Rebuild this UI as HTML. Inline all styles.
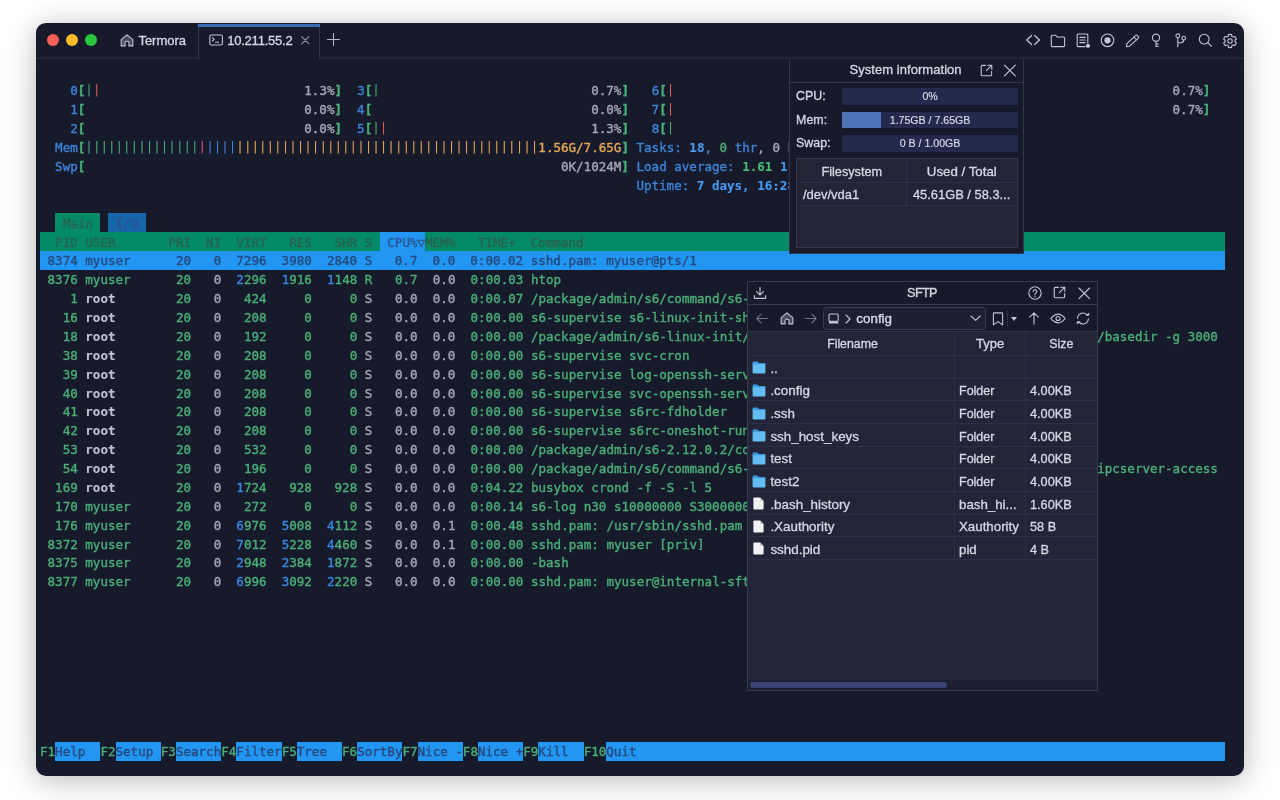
<!DOCTYPE html>
<html lang="en">
<head>
<meta charset="utf-8">
<title>Termora</title>
<style>
html,body{margin:0;padding:0;}
body{width:1280px;height:800px;background:#ffffff;overflow:hidden;position:relative;font-family:"Liberation Sans",sans-serif;}
#win{will-change:transform;position:absolute;left:36px;top:23px;width:1208px;height:753px;border-radius:10px;background:#171a2b;overflow:hidden;}
#shadow{position:absolute;left:36px;top:23.5px;width:1208px;height:752.5px;border-radius:10px;box-shadow:0 2px 26px rgba(0,0,0,0.21),0 10px 44px rgba(0,0,0,0.09);}
#titlebar{position:absolute;left:0;top:0;width:1208px;height:35.5px;background:linear-gradient(#171a2b,#171a2b) 0 0/100% 33.5px no-repeat,linear-gradient(#282b3f,#282b3f) 0 33.5px/100% 1px no-repeat,linear-gradient(#24273a,#24273a) 0 34.5px/100% 1px no-repeat;}
.tl{position:absolute;top:10.8px;width:12px;height:12px;border-radius:50%;}
.ui{color:#d5d7e2;font-size:13px;white-space:nowrap;position:absolute;}
svg{position:absolute;overflow:visible;}
.ic{stroke:#c3c6d4;fill:none;stroke-width:1.1;stroke-linecap:round;stroke-linejoin:round;}
.bar{position:absolute;left:52.4px;width:175.2px;height:16.5px;background:#242a4d;}
.bt{position:absolute;left:0;top:0;width:100%;text-align:center;color:#d5d7e2;-webkit-text-stroke:0.2px currentColor;font-size:10.6px;line-height:16.5px;white-space:nowrap;}
.tt{-webkit-text-stroke:0.32px currentColor;}
/* terminal */
#term{position:absolute;left:0;top:0;width:1208px;height:752px;font-family:"DejaVu Sans Mono","Liberation Mono",monospace;font-size:12.54px;color:#a5a8ba;}
.tr{position:absolute;left:4px;height:19.2px;line-height:18.88px;white-space:pre;letter-spacing:0.005px;}
.tr span{display:inline-block;height:17.7px;padding-top:1.5px;line-height:18.88px;vertical-align:top;-webkit-text-stroke:0.38px currentColor;}
.b{color:#3d82d6;}
.B{color:#4a9af2;font-weight:bold;}
.G{color:#4ab57a;font-weight:bold;}
.n{color:#4aad77;}
.N{color:#47bd74;font-weight:bold;}
.g{color:#a3a6b8;}
.W{color:#bfc2d1;font-weight:bold;}
.tr span.W,.tr span.B,.tr span.N{-webkit-text-stroke:0.1px currentColor;}
.tr span.G{-webkit-text-stroke:0.3px currentColor;}
.r{color:#e0604f;}
.m{color:#d4507c;}
.u{color:#3a86e0;}
.o{color:#e3a656;}
.tr span.tri{width:7.55px;overflow:hidden;text-align:center;}
.tr span.k{-webkit-text-stroke:0;position:relative;top:-1.2px;}
.tabm{background:#058a68;color:#286551;}
.tabi{background:#1766aa;color:#2a5490;}
.hdr{background:#058a68;color:#27624f;}
.hsel{background:#2196f3;color:#2a5590;}
.sel{background:#2196f3;color:#27497c;}
.fk{background:#2196f3;color:#27497c;}
</style>
</head>
<body>
<div id="shadow"></div>
<div id="win">
<div id="inner" style="position:absolute;left:0;top:0.5px;width:1208px;height:752.5px;">
<div id="term">
<div class="tr" style="top:57.48px"><span class="b">    0</span><span class="G">[</span><span class="n k">|</span><span class="r k">|</span>                           <span class="g">1.3%</span><span class="G">]</span><span class="b">  3</span><span class="G">[</span><span class="n k">|</span>                            <span class="g">0.7%</span><span class="G">]</span><span class="b">   6</span><span class="G">[</span><span class="r k">|</span>                                                                  <span class="g">0.7%</span><span class="G">]</span></div>
<div class="tr" style="top:76.36px"><span class="b">    1</span><span class="G">[</span>                             <span class="g">0.0%</span><span class="G">]</span><span class="b">  4</span><span class="G">[</span>                             <span class="g">0.0%</span><span class="G">]</span><span class="b">   7</span><span class="G">[</span><span class="r k">|</span>                                                                  <span class="g">0.7%</span><span class="G">]</span></div>
<div class="tr" style="top:95.24px"><span class="b">    2</span><span class="G">[</span>                             <span class="g">0.0%</span><span class="G">]</span><span class="b">  5</span><span class="G">[</span><span class="n k">|</span><span class="r k">|</span>                           <span class="g">1.3%</span><span class="G">]</span>   <span class="b">8</span><span class="G">[</span><span class="n k">|</span></div>
<div class="tr" style="top:114.12px">  <span class="b">Mem</span><span class="G">[</span><span class="n k">|||||||||||||||</span><span class="m k">|</span><span class="u k">||||</span><span class="o k">||||||||||||||||||||||||||||||||||||||||</span><span class="o">1.56G/7.65G</span><span class="G">]</span> <span class="b">Tasks: </span><span class="B">18</span><span class="b">, </span><span class="n">0</span><span class="b"> thr</span><span class="g">, 0 kthr</span><span class="b">; </span><span class="N">1</span><span class="b"> running</span></div>
<div class="tr" style="top:133.00px">  <span class="b">Swp</span><span class="G">[</span>                                                               <span class="g">0K/1024M</span><span class="G">]</span> <span class="b">Load average: </span><span class="N">1.61 </span><span class="B">1.48 </span><span class="b">1.40</span></div>
<div class="tr" style="top:151.88px">                                                                               <span class="b">Uptime: </span><span class="B">7 days, 16:28:41</span></div>
<div class="tr" style="top:189.64px">  <span class="tabm"> Main </span> <span class="tabi"> I/O </span></div>
<div class="tr" style="top:208.52px"><span class="hdr">  PID USER       PRI  NI  VIRT   RES   SHR S </span><span class="hsel"> CPU%</span><span class="hsel tri">▽</span><span class="hdr">MEM%   TIME+  Command                                                                                     </span></div>
<div class="tr" style="top:227.40px"><span class="sel"> 8374 myuser      20   0  7296  3980  2840 S   0.7  0.0  0:00.02 sshd.pam: myuser@pts/1                                                                      </span></div>
<div class="tr" style="top:246.28px"><span class="n"> 8376</span> <span class="n">myuser    </span> <span class="n"> 20</span> <span class="g">  0</span>  <span class="u">2</span><span class="n">296</span>  <span class="u">1</span><span class="n">916</span>  <span class="u">1</span><span class="n">148</span> <span class="n">R</span>   <span class="n">0.7</span>  <span class="g">0.0</span>  <span class="n">0:00.03</span> <span class="n">htop</span></div>
<div class="tr" style="top:265.16px"><span class="n">    1</span> <span class="W">root      </span> <span class="n"> 20</span> <span class="g">  0</span>   <span class="n">424</span>     <span class="n">0</span>     <span class="n">0</span> <span class="g">S</span>   <span class="g">0.0</span>  <span class="g">0.0</span>  <span class="n">0:00.07</span> <span class="n">/package/admin/s6/command/s6-svscan -d4 -- /run/service</span></div>
<div class="tr" style="top:284.04px"><span class="n">   16</span> <span class="W">root      </span> <span class="n"> 20</span> <span class="g">  0</span>   <span class="n">208</span>     <span class="n">0</span>     <span class="n">0</span> <span class="g">S</span>   <span class="g">0.0</span>  <span class="g">0.0</span>  <span class="n">0:00.00</span> <span class="n">s6-supervise s6-linux-init-shutdownd</span></div>
<div class="tr" style="top:302.92px"><span class="n">   18</span> <span class="W">root      </span> <span class="n"> 20</span> <span class="g">  0</span>   <span class="n">192</span>     <span class="n">0</span>     <span class="n">0</span> <span class="g">S</span>   <span class="g">0.0</span>  <span class="g">0.0</span>  <span class="n">0:00.00</span> <span class="n">/package/admin/s6-linux-init/command/s6-linux-init-shutdownd -d3 -c /run/s6/basedir -g 3000</span></div>
<div class="tr" style="top:321.80px"><span class="n">   38</span> <span class="W">root      </span> <span class="n"> 20</span> <span class="g">  0</span>   <span class="n">208</span>     <span class="n">0</span>     <span class="n">0</span> <span class="g">S</span>   <span class="g">0.0</span>  <span class="g">0.0</span>  <span class="n">0:00.00</span> <span class="n">s6-supervise svc-cron</span></div>
<div class="tr" style="top:340.68px"><span class="n">   39</span> <span class="W">root      </span> <span class="n"> 20</span> <span class="g">  0</span>   <span class="n">208</span>     <span class="n">0</span>     <span class="n">0</span> <span class="g">S</span>   <span class="g">0.0</span>  <span class="g">0.0</span>  <span class="n">0:00.00</span> <span class="n">s6-supervise log-openssh-server</span></div>
<div class="tr" style="top:359.56px"><span class="n">   40</span> <span class="W">root      </span> <span class="n"> 20</span> <span class="g">  0</span>   <span class="n">208</span>     <span class="n">0</span>     <span class="n">0</span> <span class="g">S</span>   <span class="g">0.0</span>  <span class="g">0.0</span>  <span class="n">0:00.00</span> <span class="n">s6-supervise svc-openssh-server</span></div>
<div class="tr" style="top:378.44px"><span class="n">   41</span> <span class="W">root      </span> <span class="n"> 20</span> <span class="g">  0</span>   <span class="n">208</span>     <span class="n">0</span>     <span class="n">0</span> <span class="g">S</span>   <span class="g">0.0</span>  <span class="g">0.0</span>  <span class="n">0:00.00</span> <span class="n">s6-supervise s6rc-fdholder</span></div>
<div class="tr" style="top:397.32px"><span class="n">   42</span> <span class="W">root      </span> <span class="n"> 20</span> <span class="g">  0</span>   <span class="n">208</span>     <span class="n">0</span>     <span class="n">0</span> <span class="g">S</span>   <span class="g">0.0</span>  <span class="g">0.0</span>  <span class="n">0:00.00</span> <span class="n">s6-supervise s6rc-oneshot-runner</span></div>
<div class="tr" style="top:416.20px"><span class="n">   53</span> <span class="W">root      </span> <span class="n"> 20</span> <span class="g">  0</span>   <span class="n">532</span>     <span class="n">0</span>     <span class="n">0</span> <span class="g">S</span>   <span class="g">0.0</span>  <span class="g">0.0</span>  <span class="n">0:00.00</span> <span class="n">/package/admin/s6-2.12.0.2/command/s6-ipcserverd -1 -- s6-ipcserver-access</span></div>
<div class="tr" style="top:435.08px"><span class="n">   54</span> <span class="W">root      </span> <span class="n"> 20</span> <span class="g">  0</span>   <span class="n">196</span>     <span class="n">0</span>     <span class="n">0</span> <span class="g">S</span>   <span class="g">0.0</span>  <span class="g">0.0</span>  <span class="n">0:00.00</span> <span class="n">/package/admin/s6/command/s6-ipcserver-socketbinder -- s6 s6-ipcserverd s6-ipcserver-access</span></div>
<div class="tr" style="top:453.96px"><span class="n">  169</span> <span class="W">root      </span> <span class="n"> 20</span> <span class="g">  0</span>  <span class="u">1</span><span class="n">724</span>   <span class="n">928</span>   <span class="n">928</span> <span class="g">S</span>   <span class="g">0.0</span>  <span class="g">0.0</span>  <span class="n">0:04.22</span> <span class="n">busybox crond -f -S -l 5</span></div>
<div class="tr" style="top:472.84px"><span class="n">  170</span> <span class="n">myuser    </span> <span class="n"> 20</span> <span class="g">  0</span>   <span class="n">272</span>     <span class="n">0</span>     <span class="n">0</span> <span class="g">S</span>   <span class="g">0.0</span>  <span class="g">0.0</span>  <span class="n">0:00.14</span> <span class="n">s6-log n30 s10000000 S30000000 T !gzip /config/logs/openssh</span></div>
<div class="tr" style="top:491.72px"><span class="n">  176</span> <span class="n">myuser    </span> <span class="n"> 20</span> <span class="g">  0</span>  <span class="u">6</span><span class="n">976</span>  <span class="u">5</span><span class="n">008</span>  <span class="u">4</span><span class="n">112</span> <span class="g">S</span>   <span class="g">0.0</span>  <span class="g">0.1</span>  <span class="n">0:00.48</span> <span class="n">sshd.pam: /usr/sbin/sshd.pam -D -e -p 2222 [listener] 0 of 10-100</span></div>
<div class="tr" style="top:510.60px"><span class="n"> 8372</span> <span class="n">myuser    </span> <span class="n"> 20</span> <span class="g">  0</span>  <span class="u">7</span><span class="n">012</span>  <span class="u">5</span><span class="n">228</span>  <span class="u">4</span><span class="n">460</span> <span class="g">S</span>   <span class="g">0.0</span>  <span class="g">0.1</span>  <span class="n">0:00.00</span> <span class="n">sshd.pam: myuser [priv]</span></div>
<div class="tr" style="top:529.48px"><span class="n"> 8375</span> <span class="n">myuser    </span> <span class="n"> 20</span> <span class="g">  0</span>  <span class="u">2</span><span class="n">948</span>  <span class="u">2</span><span class="n">384</span>  <span class="u">1</span><span class="n">872</span> <span class="g">S</span>   <span class="g">0.0</span>  <span class="g">0.0</span>  <span class="n">0:00.00</span> <span class="n">-bash</span></div>
<div class="tr" style="top:548.36px"><span class="n"> 8377</span> <span class="n">myuser    </span> <span class="n"> 20</span> <span class="g">  0</span>  <span class="u">6</span><span class="n">996</span>  <span class="u">3</span><span class="n">092</span>  <span class="u">2</span><span class="n">220</span> <span class="g">S</span>   <span class="g">0.0</span>  <span class="g">0.0</span>  <span class="n">0:00.00</span> <span class="n">sshd.pam: myuser@internal-sftp</span></div>
<div class="tr" style="top:718.28px"><span class="n">F1</span><span class="fk">Help  </span><span class="n">F2</span><span class="fk">Setup </span><span class="n">F3</span><span class="fk">Search</span><span class="n">F4</span><span class="fk">Filter</span><span class="n">F5</span><span class="fk">Tree  </span><span class="n">F6</span><span class="fk">SortBy</span><span class="n">F7</span><span class="fk">Nice -</span><span class="n">F8</span><span class="fk">Nice +</span><span class="n">F9</span><span class="fk">Kill  </span><span class="n">F10</span><span class="fk">Quit                                                                              </span></div>
</div>
<div id="titlebar">
  <div class="tl" style="left:11px;background:#fe5f57"></div>
  <div class="tl" style="left:30px;background:#febc2e"></div>
  <div class="tl" style="left:48.5px;background:#28c840"></div>
</div>
<!-- tabs -->
<div style="position:absolute;left:162px;top:0;width:122px;height:35.5px;background:#171a2b;border-left:1px solid #34374b;border-right:1px solid #34374b;box-sizing:border-box;"></div>
<div style="position:absolute;left:162px;top:0;width:122px;height:3.2px;background:#3a6cb3;"></div>
<svg style="left:84px;top:10.5px" width="14" height="13" viewBox="0 0 14 13"><path class="ic" style="fill:#4b4e60" d="M1.2 5.6 L7 0.9 L12.8 5.6 V11.9 H8.9 V8.2 Q8.9 7.2 7.9 7.2 H6.1 Q5.1 7.2 5.1 8.2 V11.9 H1.2 Z"/></svg>
<div class="ui tt" style="left:102.4px;top:9px;line-height:16px;font-size:13px;">Termora</div>
<svg style="left:173px;top:10.6px" width="15" height="13" viewBox="0 0 15 13"><rect class="ic" x="0.8" y="1" width="12.6" height="10" rx="1.6"/><path class="ic" d="M3.3 3.6 L5.2 5.3 L3.3 7 M6.4 8.2 H9.6"/></svg>
<div class="ui tt" style="left:191.2px;top:9px;line-height:16px;font-size:13px;letter-spacing:-0.22px;">10.211.55.2</div>
<svg style="left:264.5px;top:12.6px" width="9" height="9" viewBox="0 0 9 9"><path class="ic" style="stroke:#9093a5" d="M0.7 0.7 L7.9 7.9 M7.9 0.7 L0.7 7.9"/></svg>
<svg style="left:290.8px;top:9.9px" width="13" height="13" viewBox="0 0 13 13"><path class="ic" style="stroke-width:1;stroke:#b4b7c6" d="M6.5 0.5 V12.5 M0.5 6.5 H12.5"/></svg>
<!-- right toolbar icons; centers at 997,1021.6,1046.2,1070.8,1095.4,1120,1144.6,1169.2,1193.8 ; cy=16.5 -->
<svg style="left:989px;top:9.5px" width="16" height="14" viewBox="0 0 16 14"><path class="ic" style="stroke-width:1.3" d="M6.6 2.6 L1.8 7 L6.6 11.4 M9.6 2.6 L14.4 7 L9.6 11.4"/></svg>
<svg style="left:1014px;top:10px" width="16" height="14" viewBox="0 0 16 14"><path class="ic" d="M1.3 2.2 Q1.3 1.2 2.3 1.2 H5.6 L7.2 3 H13.6 Q14.6 3 14.6 4 V11.6 Q14.6 12.6 13.6 12.6 H2.3 Q1.3 12.6 1.3 11.6 Z"/></svg>
<svg style="left:1040px;top:9.5px" width="15" height="16" viewBox="0 0 15 16"><path class="ic" d="M9.2 13.6 H2.2 Q1.2 13.6 1.2 12.6 V2 Q1.2 1 2.2 1 H10.8 Q11.8 1 11.8 2 V10"/><path class="ic" d="M3.8 4.4 H9.2 M3.8 7 H9.2 M3.8 9.6 H9.2"/><circle cx="12" cy="12.8" r="2.1" fill="#c3c6d4"/></svg>
<svg style="left:1063.5px;top:9.5px" width="15" height="15" viewBox="0 0 15 15"><circle class="ic" cx="7.5" cy="7.3" r="6.3"/><circle cx="7.5" cy="7.3" r="3.1" fill="#c3c6d4"/></svg>
<svg style="left:1088.5px;top:10px" width="15" height="14" viewBox="0 0 15 14"><path class="ic" d="M1.4 12.6 L1.9 9.6 L10.6 1.3 Q11.3 0.7 12 1.3 L13.4 2.7 Q14 3.4 13.4 4.1 L4.6 12.2 Z M8.8 3.1 L11.7 5.9"/></svg>
<svg style="left:1114px;top:9.5px" width="12" height="15" viewBox="0 0 12 15"><circle class="ic" cx="6" cy="4.7" r="3.6"/><path class="ic" d="M6 8.3 V13.6 M6 11 H8.4 M6 13.2 H8.4"/></svg>
<svg style="left:1138px;top:9.5px" width="13" height="15" viewBox="0 0 13 15"><circle class="ic" cx="3.8" cy="2.8" r="1.9"/><circle class="ic" cx="9.7" cy="5.2" r="1.9"/><path class="ic" d="M3.8 4.7 V13.7 M9.7 7.1 Q9.7 9.8 7 9.8 H3.8"/></svg>
<svg style="left:1162px;top:9.5px" width="15" height="15" viewBox="0 0 15 15"><circle class="ic" cx="6.2" cy="6.1" r="4.9"/><path class="ic" d="M9.8 9.7 L13.4 13.2"/></svg>
<svg style="left:1186px;top:9px" width="16" height="16" viewBox="0 0 16 16"><path class="ic" d="M6.21 3.33 L6.40 1.60 A6.6 6.6 0 0 1 9.60 1.60 L9.79 3.33 A5.0 5.0 0 0 1 11.15 4.11 L12.75 3.42 A6.6 6.6 0 0 1 14.34 6.18 L12.94 7.22 A5.0 5.0 0 0 1 12.94 8.78 L14.34 9.82 A6.6 6.6 0 0 1 12.75 12.58 L11.15 11.89 A5.0 5.0 0 0 1 9.79 12.67 L9.60 14.40 A6.6 6.6 0 0 1 6.40 14.40 L6.21 12.67 A5.0 5.0 0 0 1 4.85 11.89 L3.25 12.58 A6.6 6.6 0 0 1 1.66 9.82 L3.06 8.78 A5.0 5.0 0 0 1 3.06 7.22 L1.66 6.18 A6.6 6.6 0 0 1 3.25 3.42 L4.85 4.11 A5.0 5.0 0 0 1 6.21 3.33 Z"/><circle class="ic" cx="8" cy="8" r="2.2"/></svg>

<!-- System information panel -->
<div id="sys" style="position:absolute;left:753.1px;top:35px;width:234.9px;height:195px;background:#171a2b;border:1px solid #34374b;border-top:none;box-sizing:border-box;">
  <div style="position:absolute;left:0;top:23px;width:232.9px;height:1px;background:#34374b;"></div>
  <div class="ui tt" style="left:59.4px;top:3.9px;line-height:16px;font-size:13px;letter-spacing:0.05px;">System information</div>
  <svg style="left:189.5px;top:5px" width="13" height="13" viewBox="0 0 13 13"><path class="ic" d="M5.4 1.4 H2.6 Q1.2 1.4 1.2 2.8 V10.4 Q1.2 11.8 2.6 11.8 H10.2 Q11.6 11.8 11.6 10.4 V7.6 M7.6 1.2 H11.8 V5.4 M11.6 1.4 L6.4 6.6"/></svg>
  <svg style="left:214px;top:5px" width="13" height="13" viewBox="0 0 13 13"><path class="ic" d="M0.5 1.1 L11.3 11.9 M11.3 1.1 L0.5 11.9"/></svg>
  <div class="ui tt" style="left:6px;top:29.8px;line-height:16.5px;font-size:12.4px;">CPU:</div>
  <div class="ui tt" style="left:6px;top:53.3px;line-height:16.5px;font-size:12.4px;">Mem:</div>
  <div class="ui tt" style="left:6px;top:76.8px;line-height:16.5px;font-size:12.4px;">Swap:</div>
  <div class="bar" style="top:29.5px;"><div class="bt">0%</div></div>
  <div class="bar" style="top:53px;"><div style="position:absolute;left:0;top:0;height:16.5px;width:39px;background:#4c71b5;"></div><div class="bt">1.75GB / 7.65GB</div></div>
  <div class="bar" style="top:76.5px;"><div class="bt">0 B / 1.00GB</div></div>
  <div style="position:absolute;left:6.2px;top:99.5px;width:221.6px;height:89.5px;background:#222537;border:1px solid #35384d;box-sizing:border-box;">
    <div style="position:absolute;left:0;top:23px;width:219.6px;height:1px;background:#2d3046;"></div>
    <div style="position:absolute;left:0;top:45.7px;width:219.6px;height:1px;background:#2d3046;"></div>
    <div style="position:absolute;left:108.6px;top:0;width:1px;height:46.2px;background:#2d3046;"></div>
    <div class="ui tt" style="left:0;top:4.7px;width:109px;text-align:center;line-height:16px;font-size:12.7px;">Filesystem</div>
    <div class="ui tt" style="left:109.5px;top:4.7px;width:110px;text-align:center;line-height:16px;font-size:13.3px;">Used / Total</div>
    <div class="ui tt" style="left:5.6px;top:27.9px;line-height:16px;font-size:13px;">/dev/vda1</div>
    <div class="ui tt" style="left:115.6px;top:27.9px;line-height:16px;font-size:12.9px;">45.61GB / 58.3...</div>
  </div>
</div>

<!-- SFTP panel -->
<div style="position:absolute;left:711px;top:257.0px;width:351px;height:410.5px;background:#171a2b;border:1px solid #383b50;box-sizing:border-box;"></div>
<div style="position:absolute;left:712px;top:280.5px;width:349px;height:1px;background:#383b50;"></div>
<div style="position:absolute;left:712px;top:307.8px;width:349px;height:358.7px;background:#222537;"></div>
<div style="position:absolute;left:712px;top:307.7px;width:349px;height:1.0px;background:#2f3248;"></div>
<div class="ui tt" style="left:871.1px;top:261.5px;font-size:12.6px;line-height:16px;letter-spacing:-0.6px;">SFTP</div>
<svg style="left:717px;top:262.5px" width="14" height="14" viewBox="0 0 14 14"><path class="ic" d="M7 1.2 V8.8 M3.6 5.6 L7 9 L10.4 5.6 M1.4 9.6 V12.4 H12.6 V9.6"/></svg>
<svg style="left:991.5px;top:262.0px" width="14" height="14" viewBox="0 0 14 14"><circle class="ic" cx="7" cy="7" r="6.2"/><path class="ic" d="M5.2 5.4 Q5.2 3.7 7 3.7 Q8.8 3.7 8.8 5.3 Q8.8 6.4 7.8 6.9 Q7 7.3 7 8.3"/><circle cx="7" cy="10.3" r="0.75" fill="#c3c6d4"/></svg>
<svg style="left:1016.5px;top:262.7px" width="13" height="13" viewBox="0 0 13 13"><path class="ic" d="M5.4 1.4 H2.6 Q1.2 1.4 1.2 2.8 V10.4 Q1.2 11.8 2.6 11.8 H10.2 Q11.6 11.8 11.6 10.4 V7.6 M7.6 1.2 H11.8 V5.4 M11.6 1.4 L6.4 6.6"/></svg>
<svg style="left:1041.5px;top:263.3px" width="13" height="13" viewBox="0 0 13 13"><path class="ic" d="M1 1 L11.6 11.6 M11.6 1 L1 11.6"/></svg>
<svg style="left:720px;top:289.5px" width="12" height="11" viewBox="0 0 12 11"><path class="ic" style="stroke:#70738a" d="M11.4 5.5 H0.8 M5 1.2 L0.8 5.5 L5 9.8"/></svg>
<svg style="left:743.5px;top:288.5px" width="14" height="13" viewBox="0 0 14 13"><path class="ic" style="fill:#4b4e60" d="M1.2 5.6 L7 0.9 L12.8 5.6 V11.9 H8.9 V8.2 Q8.9 7.2 7.9 7.2 H6.1 Q5.1 7.2 5.1 8.2 V11.9 H1.2 Z"/></svg>
<svg style="left:768.6px;top:289.5px" width="12" height="11" viewBox="0 0 12 11"><path class="ic" style="stroke:#70738a" d="M0.6 5.5 H11.2 M7 1.2 L11.2 5.5 L7 9.8"/></svg>
<div style="position:absolute;left:787px;top:283.5px;width:163px;height:22.5px;background:#1d2033;border:1px solid #393c52;border-radius:3.5px;box-sizing:border-box;"></div>
<svg style="left:791.5px;top:289.0px" width="12" height="12" viewBox="0 0 12 12"><rect class="ic" x="1" y="1" width="9.2" height="7.4" rx="1.2"/><rect x="0.8" y="8.9" width="9.6" height="1.7" rx="0.4" fill="#c3c6d4"/></svg>
<svg style="left:808.5px;top:290.0px" width="6" height="10" viewBox="0 0 6 10"><path class="ic" d="M1 1 L5 5 L1 9"/></svg>
<div class="ui tt" style="left:820.3px;top:287.5px;font-size:13.4px;line-height:16px;-webkit-text-stroke:0.4px currentColor;">config</div>
<svg style="left:933.8px;top:291.9px" width="12" height="7" viewBox="0 0 12 7"><path class="ic" d="M1 1 L5.6 5.4 L10.2 1"/></svg>
<svg style="left:956px;top:288.3px" width="12" height="14" viewBox="0 0 12 14"><path class="ic" d="M1.4 1.8 Q1.4 0.9 2.3 0.9 H9.7 Q10.6 0.9 10.6 1.8 V12.9 L6 9.6 L1.4 12.9 Z"/></svg>
<div style="position:absolute;left:971.4px;top:287.8px;width:0.8px;height:1.0px;background:#4a4d63;"></div>
<div style="position:absolute;left:971.4px;top:289.8px;width:0.8px;height:1.0px;background:#4a4d63;"></div>
<div style="position:absolute;left:971.4px;top:291.8px;width:0.8px;height:1.0px;background:#4a4d63;"></div>
<div style="position:absolute;left:971.4px;top:293.8px;width:0.8px;height:1.0px;background:#4a4d63;"></div>
<div style="position:absolute;left:971.4px;top:295.8px;width:0.8px;height:1.0px;background:#4a4d63;"></div>
<div style="position:absolute;left:971.4px;top:297.8px;width:0.8px;height:1.0px;background:#4a4d63;"></div>
<div style="position:absolute;left:971.4px;top:299.8px;width:0.8px;height:1.0px;background:#4a4d63;"></div>
<div style="position:absolute;left:971.4px;top:301.8px;width:0.8px;height:1.0px;background:#4a4d63;"></div>
<svg style="left:975px;top:293.7px" width="6" height="4" viewBox="0 0 6 4"><path d="M0 0 H6 L3 4 Z" fill="#c3c6d4"/></svg>
<svg style="left:992px;top:288.7px" width="12" height="13" viewBox="0 0 12 13"><path class="ic" d="M6 12 V1 M1.7 5.2 L6 0.9 L10.3 5.2"/></svg>
<svg style="left:1014px;top:289.5px" width="16" height="11" viewBox="0 0 16 11"><path class="ic" d="M0.8 5.5 Q8 -3.2 15.2 5.5 Q8 14.2 0.8 5.5 Z"/><circle class="ic" cx="8" cy="5.5" r="2"/></svg>
<svg style="left:1039px;top:288.5px" width="16" height="13" viewBox="0 0 16 13"><path class="ic" d="M2.6 6.2 A5.4 5.4 0 0 1 12.4 3.4 M13.4 6.8 A5.4 5.4 0 0 1 3.6 9.6"/><path d="M10.6 3.6 H14.2 V0.6 Z M5.4 9.4 H1.8 V12.4 Z" fill="#c3c6d4"/></svg>
<div style="position:absolute;left:712px;top:331.7px;width:349px;height:1.0px;background:#2c2f45;"></div>
<div style="position:absolute;left:918.0px;top:308.2px;width:1.0px;height:227.76px;background:#2c2f45;"></div>
<div style="position:absolute;left:989.1px;top:308.2px;width:1.0px;height:227.76px;background:#2c2f45;"></div>
<div class="ui tt" style="left:713.2px;top:312.6px;font-size:12.3px;line-height:16px;width:206.5px;text-align:center;">Filename</div>
<div class="ui tt" style="left:918.5px;top:312.6px;font-size:13px;line-height:16px;width:71.09999999999991px;text-align:center;">Type</div>
<div class="ui tt" style="left:989.6px;top:312.6px;font-size:12.4px;line-height:16px;width:71.40000000000009px;text-align:center;">Size</div>
<div style="position:absolute;left:712px;top:354.34px;width:349px;height:1.0px;background:#2c2f45;"></div>
<svg style="left:716px;top:337.82px" width="14" height="13" viewBox="0 0 14 13"><path d="M0.6 1.6 Q0.6 0.6 1.6 0.6 H5 Q5.6 0.6 6 1.1 L6.8 2.1 H12.4 Q13.4 2.1 13.4 3.1 V4 H0.6 Z" fill="#3c9be3"/><path d="M0.6 3.3 H13.4 V11.6 Q13.4 12.6 12.4 12.6 H1.6 Q0.6 12.6 0.6 11.6 Z" fill="#63bdf3"/></svg>
<div class="ui tt" style="left:734.4px;top:337.22px;font-size:13.4px;line-height:16px;">..</div>
<div style="position:absolute;left:712px;top:376.98px;width:349px;height:1.0px;background:#2c2f45;"></div>
<svg style="left:716px;top:360.46px" width="14" height="13" viewBox="0 0 14 13"><path d="M0.6 1.6 Q0.6 0.6 1.6 0.6 H5 Q5.6 0.6 6 1.1 L6.8 2.1 H12.4 Q13.4 2.1 13.4 3.1 V4 H0.6 Z" fill="#3c9be3"/><path d="M0.6 3.3 H13.4 V11.6 Q13.4 12.6 12.4 12.6 H1.6 Q0.6 12.6 0.6 11.6 Z" fill="#63bdf3"/></svg>
<div class="ui tt" style="left:734.4px;top:359.86px;font-size:13.4px;line-height:16px;">.config</div>
<div class="ui tt" style="left:923px;top:359.86px;font-size:12.5px;line-height:16px;">Folder</div>
<div class="ui tt" style="left:994px;top:359.86px;font-size:12.7px;line-height:16px;">4.00KB</div>
<div style="position:absolute;left:712px;top:399.62px;width:349px;height:1.0px;background:#2c2f45;"></div>
<svg style="left:716px;top:383.1px" width="14" height="13" viewBox="0 0 14 13"><path d="M0.6 1.6 Q0.6 0.6 1.6 0.6 H5 Q5.6 0.6 6 1.1 L6.8 2.1 H12.4 Q13.4 2.1 13.4 3.1 V4 H0.6 Z" fill="#3c9be3"/><path d="M0.6 3.3 H13.4 V11.6 Q13.4 12.6 12.4 12.6 H1.6 Q0.6 12.6 0.6 11.6 Z" fill="#63bdf3"/></svg>
<div class="ui tt" style="left:734.4px;top:382.5px;font-size:13.4px;line-height:16px;">.ssh</div>
<div class="ui tt" style="left:923px;top:382.5px;font-size:12.5px;line-height:16px;">Folder</div>
<div class="ui tt" style="left:994px;top:382.5px;font-size:12.7px;line-height:16px;">4.00KB</div>
<div style="position:absolute;left:712px;top:422.26px;width:349px;height:1.0px;background:#2c2f45;"></div>
<svg style="left:716px;top:405.74px" width="14" height="13" viewBox="0 0 14 13"><path d="M0.6 1.6 Q0.6 0.6 1.6 0.6 H5 Q5.6 0.6 6 1.1 L6.8 2.1 H12.4 Q13.4 2.1 13.4 3.1 V4 H0.6 Z" fill="#3c9be3"/><path d="M0.6 3.3 H13.4 V11.6 Q13.4 12.6 12.4 12.6 H1.6 Q0.6 12.6 0.6 11.6 Z" fill="#63bdf3"/></svg>
<div class="ui tt" style="left:734.4px;top:405.14px;font-size:13.4px;line-height:16px;">ssh_host_keys</div>
<div class="ui tt" style="left:923px;top:405.14px;font-size:12.5px;line-height:16px;">Folder</div>
<div class="ui tt" style="left:994px;top:405.14px;font-size:12.7px;line-height:16px;">4.00KB</div>
<div style="position:absolute;left:712px;top:444.9px;width:349px;height:1.0px;background:#2c2f45;"></div>
<svg style="left:716px;top:428.38px" width="14" height="13" viewBox="0 0 14 13"><path d="M0.6 1.6 Q0.6 0.6 1.6 0.6 H5 Q5.6 0.6 6 1.1 L6.8 2.1 H12.4 Q13.4 2.1 13.4 3.1 V4 H0.6 Z" fill="#3c9be3"/><path d="M0.6 3.3 H13.4 V11.6 Q13.4 12.6 12.4 12.6 H1.6 Q0.6 12.6 0.6 11.6 Z" fill="#63bdf3"/></svg>
<div class="ui tt" style="left:734.4px;top:427.78px;font-size:13.4px;line-height:16px;">test</div>
<div class="ui tt" style="left:923px;top:427.78px;font-size:12.5px;line-height:16px;">Folder</div>
<div class="ui tt" style="left:994px;top:427.78px;font-size:12.7px;line-height:16px;">4.00KB</div>
<div style="position:absolute;left:712px;top:467.54px;width:349px;height:1.0px;background:#2c2f45;"></div>
<svg style="left:716px;top:451.02px" width="14" height="13" viewBox="0 0 14 13"><path d="M0.6 1.6 Q0.6 0.6 1.6 0.6 H5 Q5.6 0.6 6 1.1 L6.8 2.1 H12.4 Q13.4 2.1 13.4 3.1 V4 H0.6 Z" fill="#3c9be3"/><path d="M0.6 3.3 H13.4 V11.6 Q13.4 12.6 12.4 12.6 H1.6 Q0.6 12.6 0.6 11.6 Z" fill="#63bdf3"/></svg>
<div class="ui tt" style="left:734.4px;top:450.42px;font-size:13.4px;line-height:16px;">test2</div>
<div class="ui tt" style="left:923px;top:450.42px;font-size:12.5px;line-height:16px;">Folder</div>
<div class="ui tt" style="left:994px;top:450.42px;font-size:12.7px;line-height:16px;">4.00KB</div>
<div style="position:absolute;left:712px;top:490.18px;width:349px;height:1.0px;background:#2c2f45;"></div>
<svg style="left:717px;top:473.66px" width="11" height="13" viewBox="0 0 11 13"><path d="M1.4 0.4 H7 L10.6 4 V11.6 Q10.6 12.6 9.6 12.6 H1.4 Q0.4 12.6 0.4 11.6 V1.4 Q0.4 0.4 1.4 0.4 Z" fill="#f1f1f3"/><path d="M7 0.4 L10.6 4 H7.8 Q7 4 7 3.2 Z" fill="#c9c9cf"/></svg>
<div class="ui tt" style="left:734.4px;top:473.06px;font-size:13.4px;line-height:16px;">.bash_history</div>
<div class="ui tt" style="left:923px;top:473.06px;font-size:13.3px;line-height:16px;">bash_hi...</div>
<div class="ui tt" style="left:994px;top:473.06px;font-size:12.7px;line-height:16px;">1.60KB</div>
<div style="position:absolute;left:712px;top:512.82px;width:349px;height:1.0px;background:#2c2f45;"></div>
<svg style="left:717px;top:496.3px" width="11" height="13" viewBox="0 0 11 13"><path d="M1.4 0.4 H7 L10.6 4 V11.6 Q10.6 12.6 9.6 12.6 H1.4 Q0.4 12.6 0.4 11.6 V1.4 Q0.4 0.4 1.4 0.4 Z" fill="#f1f1f3"/><path d="M7 0.4 L10.6 4 H7.8 Q7 4 7 3.2 Z" fill="#c9c9cf"/></svg>
<div class="ui tt" style="left:734.4px;top:495.7px;font-size:13.4px;line-height:16px;">.Xauthority</div>
<div class="ui tt" style="left:923px;top:495.7px;font-size:13.3px;line-height:16px;">Xauthority</div>
<div class="ui tt" style="left:994px;top:495.7px;font-size:12.7px;line-height:16px;">58 B</div>
<div style="position:absolute;left:712px;top:535.46px;width:349px;height:1.0px;background:#2c2f45;"></div>
<svg style="left:717px;top:518.94px" width="11" height="13" viewBox="0 0 11 13"><path d="M1.4 0.4 H7 L10.6 4 V11.6 Q10.6 12.6 9.6 12.6 H1.4 Q0.4 12.6 0.4 11.6 V1.4 Q0.4 0.4 1.4 0.4 Z" fill="#f1f1f3"/><path d="M7 0.4 L10.6 4 H7.8 Q7 4 7 3.2 Z" fill="#c9c9cf"/></svg>
<div class="ui tt" style="left:734.4px;top:518.34px;font-size:13.4px;line-height:16px;">sshd.pid</div>
<div class="ui tt" style="left:923px;top:518.34px;font-size:13.3px;line-height:16px;">pid</div>
<div class="ui tt" style="left:994px;top:518.34px;font-size:12.7px;line-height:16px;">4 B</div>
<div style="position:absolute;left:712px;top:656.5px;width:349px;height:10px;background:#1c1f33;"></div>
<div style="position:absolute;left:714px;top:658.8px;width:196.7px;height:6.0px;background:#3a4173;border-radius:3px;"></div>
</div>
</div>
</body>
</html>
